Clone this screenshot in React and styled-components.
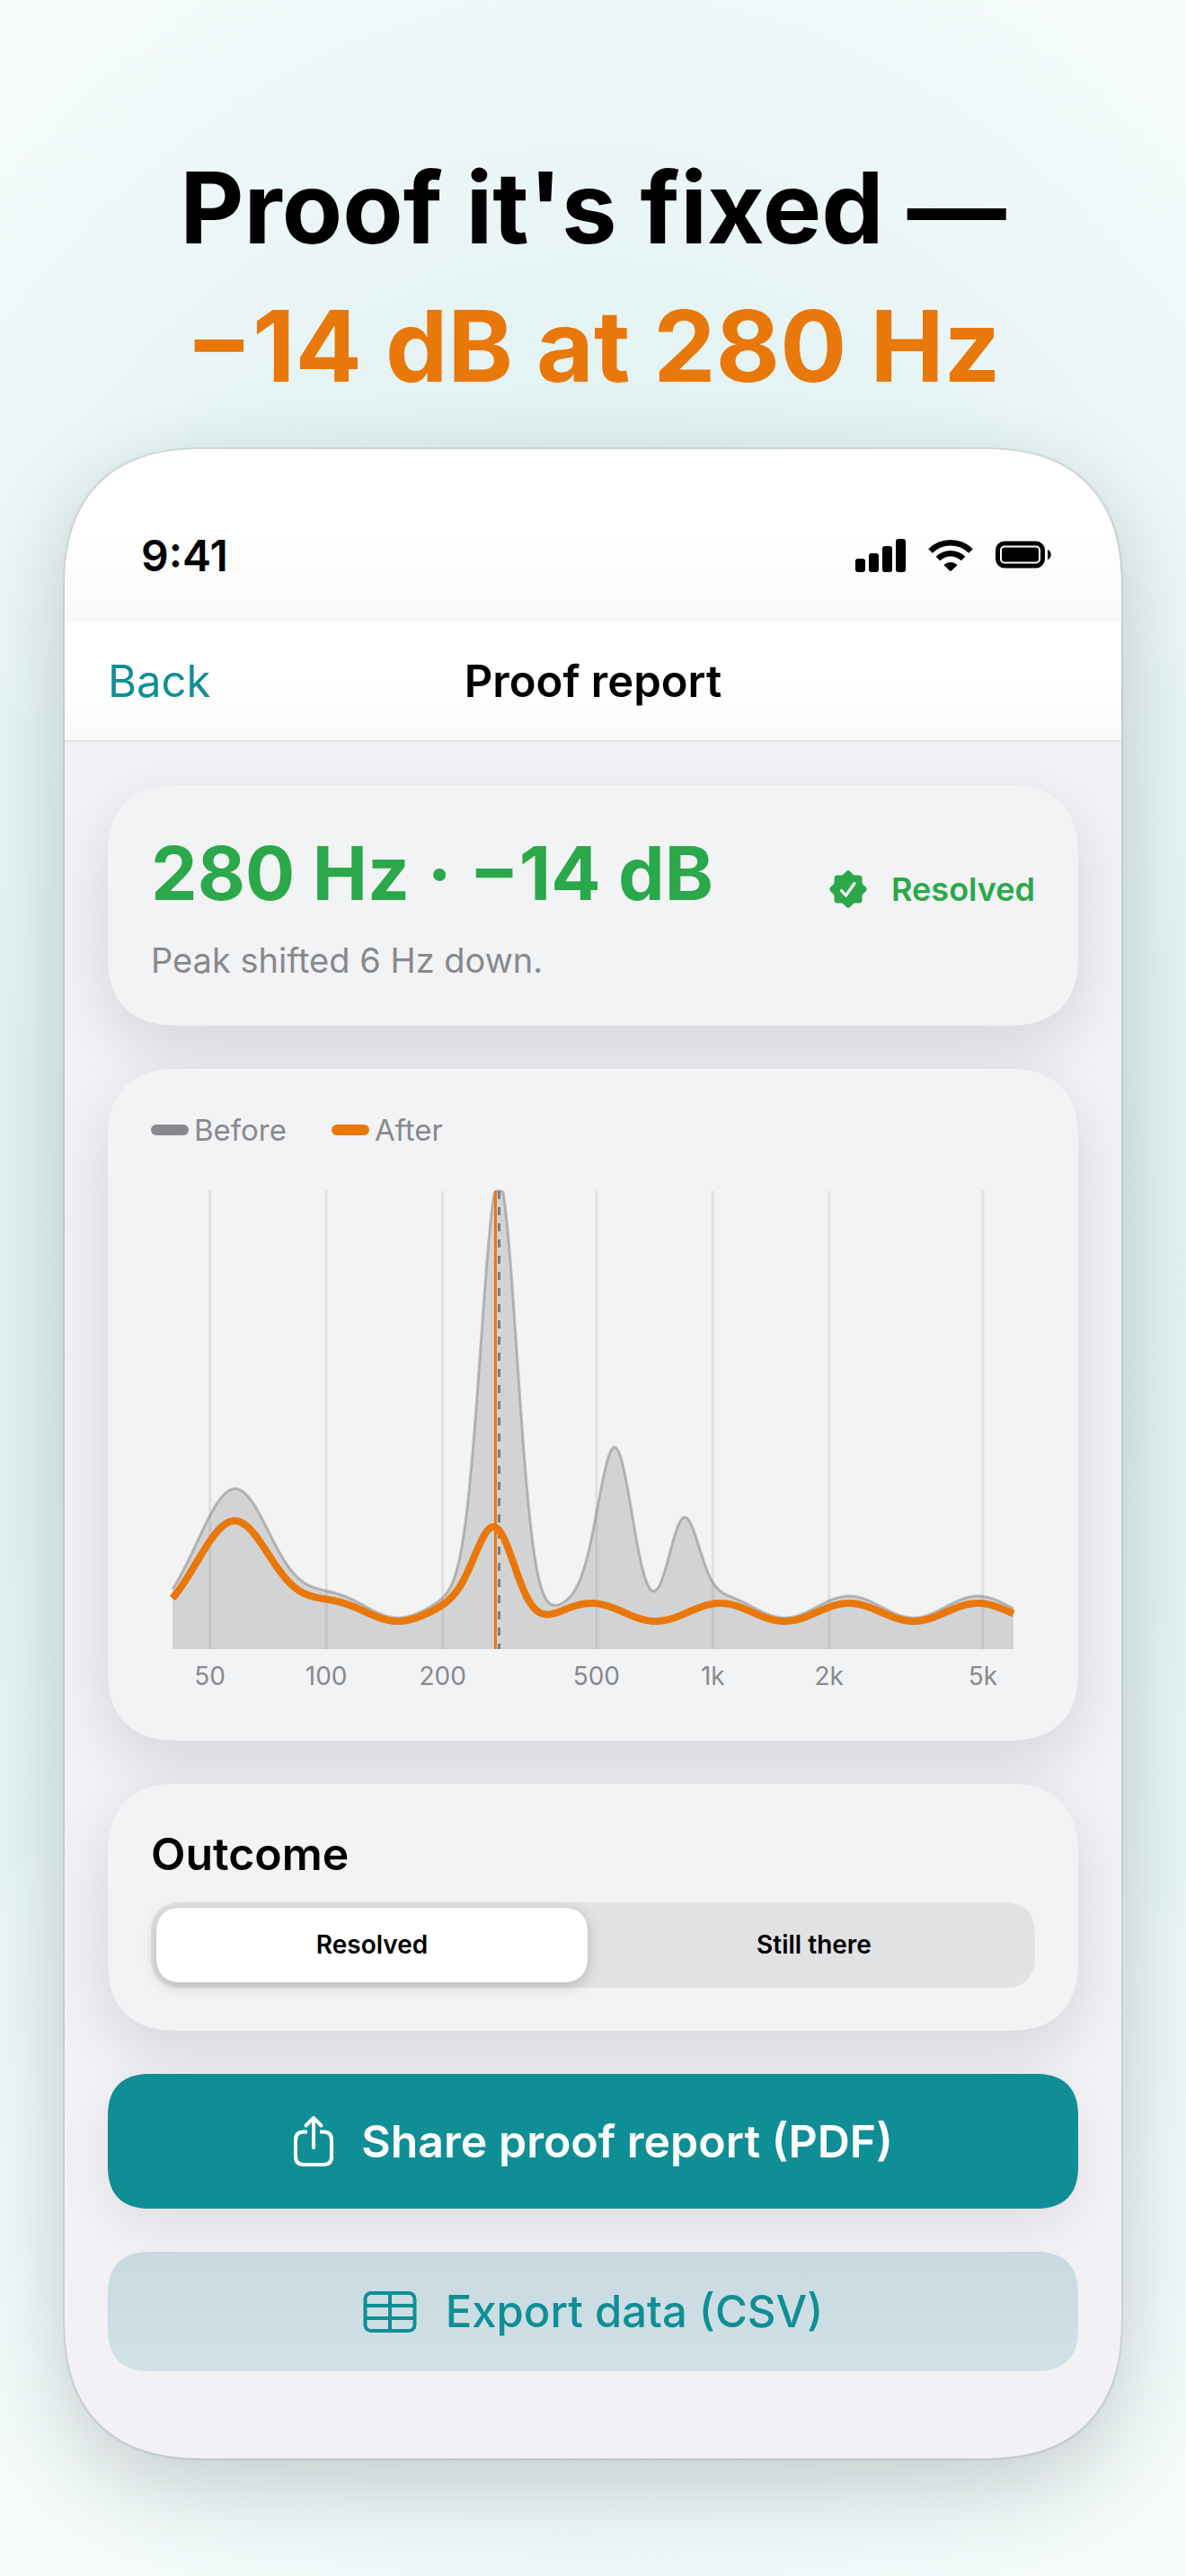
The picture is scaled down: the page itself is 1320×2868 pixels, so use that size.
import React, { useState } from "react";
import styled, { createGlobalStyle, css } from "styled-components";

const PLOT = { left: 24, top: 40, width: 936, height: 510 };
const MIN_HZ = 40;
const MAX_HZ = 6000;

const ticks = [
  { hz: 50, label: "50" },
  { hz: 100, label: "100" },
  { hz: 200, label: "200" },
  { hz: 500, label: "500" },
  { hz: 1000, label: "1k" },
  { hz: 2000, label: "2k" },
  { hz: 5000, label: "5k" },
];

const before = {
  floor: 47,
  ripple: 12,
  peaks: [
    { hz: 60, height: 132, spread: 39 },
    { hz: 280, height: 478, spread: 20 },
    { hz: 560, height: 173, spread: 19 },
    { hz: 840, height: 102, spread: 17 },
  ],
};

const after = {
  floor: 41,
  ripple: 10,
  peaks: [
    { hz: 60, height: 102, spread: 39 },
    { hz: 274, height: 95, spread: 22 },
  ],
};

const hzToX = (hz) =>
  PLOT.left +
  (Math.log(hz / MIN_HZ) / Math.log(MAX_HZ / MIN_HZ)) * PLOT.width;

const curvePoints = ({ floor, ripple, peaks }) => {
  const points = [];
  for (let i = 0; i <= PLOT.width; i += 2) {
    const x = PLOT.left + i;
    let level = floor + ripple * Math.cos((2 * Math.PI * (i - 753)) / 143.4);
    peaks.forEach((peak) => {
      const d = x - hzToX(peak.hz);
      level += peak.height * Math.exp((-d * d) / (2 * peak.spread ** 2));
    });
    const y = PLOT.top + PLOT.height - Math.min(level, PLOT.height);
    points.push(`${x},${y.toFixed(1)}`);
  }
  return points;
};

function SpectrumChart() {
  const bottom = PLOT.top + PLOT.height;
  const right = PLOT.left + PLOT.width;
  const beforePoints = curvePoints(before);
  const afterPoints = curvePoints(after);

  return (
    <Chart viewBox="0 0 984 612" role="img" aria-label="Before and after">
      {ticks.map(({ hz, label }) => (
        <g key={hz}>
          <line
            className="grid"
            x1={hzToX(hz)}
            x2={hzToX(hz)}
            y1={PLOT.top}
            y2={bottom}
          />
          <text x={hzToX(hz)} y={bottom + 40}>
            {label}
          </text>
        </g>
      ))}
      <polygon
        className="before-fill"
        points={`${PLOT.left},${bottom} ${beforePoints.join(" ")} ${right},${bottom}`}
      />
      <polyline className="before-line" points={beforePoints.join(" ")} />
      <line
        className="before-marker"
        x1={hzToX(280)}
        x2={hzToX(280)}
        y1={PLOT.top}
        y2={bottom}
      />
      <polyline className="after-line" points={afterPoints.join(" ")} />
      <line
        className="after-marker"
        x1={hzToX(274)}
        x2={hzToX(274)}
        y1={PLOT.top}
        y2={bottom}
      />
    </Chart>
  );
}

const SignalIcon = () => (
  <svg width="56" height="38" viewBox="0 0 56 38" fill="currentColor">
    <rect x="0" y="22" width="11" height="15" rx="3" />
    <rect x="15" y="16" width="11" height="21" rx="3" />
    <rect x="30" y="8" width="11" height="29" rx="3" />
    <rect x="45" y="0" width="11" height="37" rx="3" />
  </svg>
);

const WifiIcon = () => (
  <svg width="50" height="38" viewBox="0 0 50 38" fill="none" stroke="currentColor">
    <path d="M2.5 13.5A32 32 0 0 1 47.5 13.5" strokeWidth="6.5" />
    <path d="M11 22A20 20 0 0 1 39 22" strokeWidth="6.5" />
    <path
      d="M17.5 29.2C21.7 24.9 28.3 24.9 32.5 29.2L25.8 35.6Q25 36.3 24.2 35.6Z"
      fill="currentColor"
      stroke="none"
    />
  </svg>
);

const BatteryIcon = () => (
  <svg width="63" height="38" viewBox="0 0 63 38" fill="currentColor">
    <rect x="2.5" y="5" width="50" height="25" rx="7.5" fill="none" stroke="currentColor" strokeWidth="5" />
    <rect x="7" y="9.5" width="41" height="16" rx="3" />
    <path d="M58 12C63 13.5 63 21.5 58 23Z" />
  </svg>
);

const SealIcon = () => (
  <svg width="42" height="42" viewBox="0 0 42 42" fill="none">
    <g fill="#2aa84a" stroke="#2aa84a" strokeWidth="7" strokeLinejoin="round">
      <rect x="9" y="9" width="24" height="24" />
      <rect x="9" y="9" width="24" height="24" transform="rotate(45 21 21)" />
    </g>
    <path
      d="M13.5 22.5L18.5 28L28 14.5"
      stroke="#f2f3f5"
      strokeWidth="3.2"
      strokeLinecap="round"
      strokeLinejoin="round"
    />
  </svg>
);

const ShareIcon = () => (
  <svg width="46" height="58" viewBox="0 0 46 58" fill="none" stroke="currentColor" strokeWidth="4" strokeLinecap="round" strokeLinejoin="round">
    <path d="M16 18.5H12Q3 18.5 3 27.5V46Q3 55 12 55H34Q43 55 43 46V27.5Q43 18.5 34 18.5H30" strokeLinecap="butt" />
    <path d="M23 36V3M14.5 11.5L23 3L31.5 11.5" />
  </svg>
);

const TableIcon = () => (
  <svg width="60" height="46" viewBox="0 0 60 46" fill="none" stroke="currentColor" strokeWidth="4">
    <rect x="2.5" y="2" width="55" height="42" rx="6.5" />
    <path d="M30 2V44M2.5 16H57.5M2.5 30H57.5" />
  </svg>
);

function App() {
  const [outcome, setOutcome] = useState("resolved");

  return (
    <Page>
      <GlobalStyle />
      <Headline>
        Proof it's fixed —<span>−14 dB at 280 Hz</span>
      </Headline>
      <Phone>
        <StatusBar>
          <time>9:41</time>
          <StatusIcons>
            <SignalIcon />
            <WifiIcon />
            <BatteryIcon />
          </StatusIcons>
        </StatusBar>
        <NavBar>
          <BackLink href="#back">Back</BackLink>
          <h2>Proof report</h2>
        </NavBar>
        <Content>
          <SummaryCard>
            <div>
              <Result>280 Hz · −14 dB</Result>
              <Note>Peak shifted 6 Hz down.</Note>
            </div>
            <Badge>
              <SealIcon />
              Resolved
            </Badge>
          </SummaryCard>

          <ChartCard>
            <Legend>
              <LegendItem $color="#88898d">Before</LegendItem>
              <LegendItem $color="#e9780a">After</LegendItem>
            </Legend>
            <SpectrumChart />
          </ChartCard>

          <OutcomeCard>
            <h3>Outcome</h3>
            <Segmented>
              <Segment
                $active={outcome === "resolved"}
                aria-pressed={outcome === "resolved"}
                onClick={() => setOutcome("resolved")}
              >
                Resolved
              </Segment>
              <Segment
                $active={outcome === "still"}
                aria-pressed={outcome === "still"}
                onClick={() => setOutcome("still")}
              >
                Still there
              </Segment>
            </Segmented>
          </OutcomeCard>

          <ShareButton>
            <ShareIcon />
            Share proof report (PDF)
          </ShareButton>
          <ExportButton>
            <TableIcon />
            Export data (CSV)
          </ExportButton>
        </Content>
      </Phone>
    </Page>
  );
}

export default App;

const GlobalStyle = createGlobalStyle`
  * {
    box-sizing: border-box;
  }

  body {
    margin: 0;
    background: #f6fbfc;
    font-family: Inter, "Liberation Sans", sans-serif;
    color: #000;
  }

  h1, h2, h3, p {
    margin: 0;
  }

  button {
    border: 0;
    font-family: inherit;
    cursor: pointer;
  }
`;

// smoother corners where the browser can draw them
const rounded = (radius) => css`
  border-radius: ${radius}px;

  @supports (corner-shape: superellipse(1.3)) {
    border-radius: ${Math.round(radius * 1.2)}px;
    corner-shape: superellipse(1.3);
  }
`;

const Page = styled.main`
  display: flex;
  flex-direction: column;
  min-height: 100vh;
  padding: 154px 72px 131px;
  overflow: hidden;
  background: radial-gradient(ellipse 86% 58% at 50% 50%, #d0eae8 0%, #d0eae8 20%, #e9f5f6 72%, #f5fbfb 100%);
`;

const Headline = styled.h1`
  font-size: 110px;
  font-weight: 700;
  line-height: 154px;
  text-align: center;

  span {
    display: block;
    color: #e9780a;
  }
`;

const Phone = styled.section`
  ${rounded(132)}
  margin-top: 38px;
  overflow: hidden;
  background: #f2f1f6;
  box-shadow: 0 0 0 2px rgba(0, 0, 0, 0.07), 0 30px 100px rgba(0, 0, 0, 0.18);
`;

const StatusBar = styled.div`
  display: flex;
  justify-content: space-between;
  align-items: center;
  height: 193px;
  padding: 44px 77px 0 85px;
  background: linear-gradient(#fff 50%, #f8f8f8);
  font-size: 48px;
  font-weight: 600;
`;

const StatusIcons = styled.div`
  display: flex;
  align-items: center;
  gap: 25px;
`;

const NavBar = styled.header`
  display: grid;
  grid-template-columns: 1fr auto 1fr;
  align-items: center;
  height: 133px;
  padding: 0 48px;
  border-bottom: 2px solid #e3e2e6;
  background: linear-gradient(#fff 50%, #f9f9fa);

  h2 {
    font-size: 49px;
    font-weight: 600;
  }
`;

const BackLink = styled.a`
  color: #0f8f95;
  font-size: 49px;
  text-decoration: none;
`;

const Content = styled.div`
  display: flex;
  flex-direction: column;
  gap: 48px;
  padding: 48px 48px 97px;
`;

const Card = styled.section`
  ${rounded(66)}
  padding: 48px;
  background: #f2f3f5;
  box-shadow: 0 24px 72px rgba(0, 0, 0, 0.12);
`;

const SummaryCard = styled(Card)`
  display: flex;
  justify-content: space-between;
  align-items: center;
`;

const Result = styled.p`
  color: #2aa84a;
  font-size: 82px;
  font-weight: 700;
  line-height: 102px;
`;

const Note = styled.p`
  margin-top: 20px;
  color: #88898d;
  font-size: 38px;
  line-height: 50px;
`;

const Badge = styled.p`
  display: flex;
  align-items: center;
  gap: 27px;
  margin-bottom: 36px;
  color: #2aa84a;
  font-size: 36px;
  font-weight: 600;
`;

const ChartCard = styled(Card)`
  padding-bottom: 40px;
`;

const Legend = styled.div`
  display: flex;
  gap: 50px;
  color: #88898d;
  font-size: 33px;
  line-height: 40px;
`;

const LegendItem = styled.span`
  display: flex;
  align-items: center;
  gap: 6px;

  &::before {
    content: "";
    width: 42px;
    height: 12px;
    border-radius: 6px;
    background: ${({ $color }) => $color};
  }
`;

const Chart = styled.svg`
  display: block;
  width: 100%;
  margin-top: 8px;

  text {
    fill: #88898d;
    font-size: 28px;
    text-anchor: middle;
  }

  .grid {
    stroke: #dfe0e2;
    stroke-width: 3;
  }

  .before-fill {
    fill: rgba(130, 130, 130, 0.28);
  }

  .before-line {
    fill: none;
    stroke: rgba(130, 130, 134, 0.5);
    stroke-width: 3;
    stroke-linejoin: round;
  }

  .after-line {
    fill: none;
    stroke: #e9780a;
    stroke-width: 8;
    stroke-linejoin: round;
  }

  .before-marker {
    stroke: #7c7d84;
    stroke-width: 3;
    stroke-dasharray: 9 9;
  }

  .after-marker {
    stroke: #e9780a;
    stroke-width: 3;
  }
`;

const OutcomeCard = styled(Card)`
  h3 {
    font-size: 50px;
    font-weight: 600;
    line-height: 60px;
  }
`;

const Segmented = styled.div`
  ${rounded(30)}
  display: grid;
  grid-template-columns: 1fr 1fr;
  gap: 12px;
  height: 95px;
  margin-top: 24px;
  padding: 6px;
  background: #e1e2e4;
`;

const Segment = styled.button`
  ${rounded(24)}
  padding: 0 0 2px;
  background: ${({ $active }) => ($active ? "#fff" : "transparent")};
  box-shadow: ${({ $active }) =>
    $active ? "0 4px 16px rgba(0, 0, 0, 0.2)" : "none"};
  color: #000;
  font-size: 28px;
  font-weight: 600;
`;

const ActionButton = styled.button`
  ${rounded(40)}
  display: flex;
  justify-content: center;
  align-items: center;
`;

const ShareButton = styled(ActionButton)`
  gap: 30px;
  height: 150px;
  background: #0f8f95;
  box-shadow: 0 20px 60px rgba(0, 0, 0, 0.08);
  color: #fff;
  font-size: 50px;
  font-weight: 600;
`;

const ExportButton = styled(ActionButton)`
  gap: 32px;
  height: 133px;
  background: linear-gradient(#c8d9df, #d0e2e8);
  color: #0f8f95;
  font-size: 49px;
  font-weight: 500;
`;
